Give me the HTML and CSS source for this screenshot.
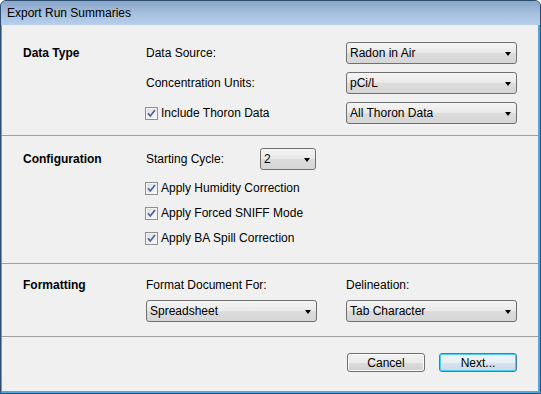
FILE: index.html
```html
<!DOCTYPE html>
<html>
<head>
    <meta charset="utf-8">
    <title>Export Run Summaries</title>
    <link rel="stylesheet" href="styles.css">
</head>
<body>
    <div class="window">
        <div class="titlebar">Export Run Summaries</div>
        <div class="client">
            <div class="group group-data">
                <div class="group-title">Data Type</div>
                <div class="label">Data Source:</div>
                <div class="combo"><span>Radon in Air</span><i class="arrow"></i></div>

                <div></div>
                <div class="label">Concentration Units:</div>
                <div class="combo"><span>pCi/L</span><i class="arrow"></i></div>

                <div></div>
                <label class="check">
                    <span class="box"><svg viewBox="0 0 13 13"><path d="M3 6.2 5.3 9 10 3"></path></svg></span>
                    Include Thoron Data
                </label>
                <div class="combo"><span>All Thoron Data</span><i class="arrow"></i></div>
            </div>

            <div class="group group-config">
                <div class="group-title">Configuration</div>
                <div class="cycle">
                    <div class="label cycle-label">Starting Cycle:</div>
                    <div class="combo combo-small"><span>2</span><i class="arrow"></i></div>
                </div>

                <label class="check wide">
                    <span class="box"><svg viewBox="0 0 13 13"><path d="M3 6.2 5.3 9 10 3"></path></svg></span>
                    Apply Humidity Correction
                </label>
                <label class="check wide">
                    <span class="box"><svg viewBox="0 0 13 13"><path d="M3 6.2 5.3 9 10 3"></path></svg></span>
                    Apply Forced SNIFF Mode
                </label>
                <label class="check wide">
                    <span class="box"><svg viewBox="0 0 13 13"><path d="M3 6.2 5.3 9 10 3"></path></svg></span>
                    Apply BA Spill Correction
                </label>
            </div>

            <div class="group group-format">
                <div class="group-title">Formatting</div>
                <div class="label">Format Document For:</div>
                <div class="label">Delineation:</div>

                <div></div>
                <div class="combo combo-mid"><span>Spreadsheet</span><i class="arrow"></i></div>
                <div class="combo"><span>Tab Character</span><i class="arrow"></i></div>
            </div>

            <div class="footer">
                <button class="btn">Cancel</button>
                <button class="btn btn-default">Next...</button>
            </div>
        </div>
    </div>
</body>
</html>
```

FILE: styles.css
```css
html, body {
    margin: 0;
    padding: 0;
}
body {
    width: 541px;
    height: 394px;
    font-family: "Liberation Sans", Arial, sans-serif;
    font-size: 12px;
    color: #000;
}
.window {
    width: 541px;
    height: 394px;
    box-sizing: border-box;
    border: 1px solid #2d4d70;
    border-radius: 6px 6px 0 0;
    background: #52a6e0;
    display: flex;
    flex-direction: column;
    overflow: hidden;
}
.titlebar {
    height: 24px;
    line-height: 24px;
    padding-left: 6px;
    background: linear-gradient(#8aa6c9, #a4bedd 50%, #b7cfea);
    flex: none;
}
.client {
    flex: 1;
    margin: 0 2px 2px 1px;
    background: #f0f0f0;
    display: flex;
    flex-direction: column;
}
.group {
    display: grid;
    grid-template-columns: 123px 200px 171px;
    padding-left: 21px;
    align-items: center;
}
.group + .group,
.footer {
    border-top: 1px solid #a0a0a0;
}
.group-title {
    font-weight: bold;
}
.group-data {
    grid-template-rows: 22px 22px 22px;
    row-gap: 8px;
    padding-top: 17px;
    padding-bottom: 11px;
}
.group-config {
    grid-template-rows: 22px 28px 25px 25px;
    padding-top: 12px;
    padding-bottom: 15px;
}
.group-config .wide {
    grid-column: 2 / 4;
    align-self: end;
}
.group-format {
    grid-template-rows: 18px 22px;
    row-gap: 6px;
    padding-top: 12px;
    padding-bottom: 14px;
}
.cycle {
    display: flex;
    align-items: center;
    grid-column: 2 / 4;
}
.cycle-label {
    width: 114px;
}
.combo {
    height: 22px;
    box-sizing: border-box;
    border: 1px solid #707070;
    border-radius: 3px;
    background: linear-gradient(#f4f4f4, #e9e9e9 50%, #dcdcdc 51%, #d6d6d6);
    display: flex;
    align-items: center;
    justify-content: space-between;
    padding-left: 3px;
}
.combo-small {
    width: 56px;
}
.combo-mid {
    width: 171px;
}
.arrow {
    width: 0;
    height: 0;
    border-top: 4px solid #000;
    border-left: 3.5px solid transparent;
    border-right: 3.5px solid transparent;
    margin-right: 5px;
    margin-top: 1px;
}
.check {
    display: flex;
    align-items: center;
    height: 20px;
    margin-left: -1px;
}
.box {
    width: 13px;
    height: 13px;
    box-sizing: border-box;
    border: 1px solid #8e8f8f;
    background: linear-gradient(135deg, #dcdcdc, #fbfbfb);
    box-shadow: inset 0 0 0 1px #f4f4f4;
    margin-right: 3px;
    position: relative;
}
.box svg {
    position: absolute;
    left: -1px;
    top: -1px;
    width: 13px;
    height: 13px;
}
.box path {
    fill: none;
    stroke: #4b629a;
    stroke-width: 1.7;
}
.footer {
    display: flex;
    justify-content: flex-end;
    gap: 14px;
    padding: 16px 21px 0 0;
    flex: 1;
    align-items: flex-start;
}
.btn {
    width: 78px;
    height: 19px;
    box-sizing: border-box;
    border: 1px solid #707070;
    border-radius: 3px;
    background: linear-gradient(#f2f2f2, #ebebeb 50%, #dddddd 51%, #cfcfcf);
    box-shadow: inset 0 0 0 1px #fbfbfb;
    font-family: inherit;
    font-size: 12px;
    padding: 0;
    color: #000;
}
.btn-default {
    border-color: #3c7fb1;
    box-shadow: inset 0 0 0 1px #4ccff7;
    background: linear-gradient(#f0f7fb, #e6f0f6 50%, #d6e4ee 51%, #cbdae6);
}
```
